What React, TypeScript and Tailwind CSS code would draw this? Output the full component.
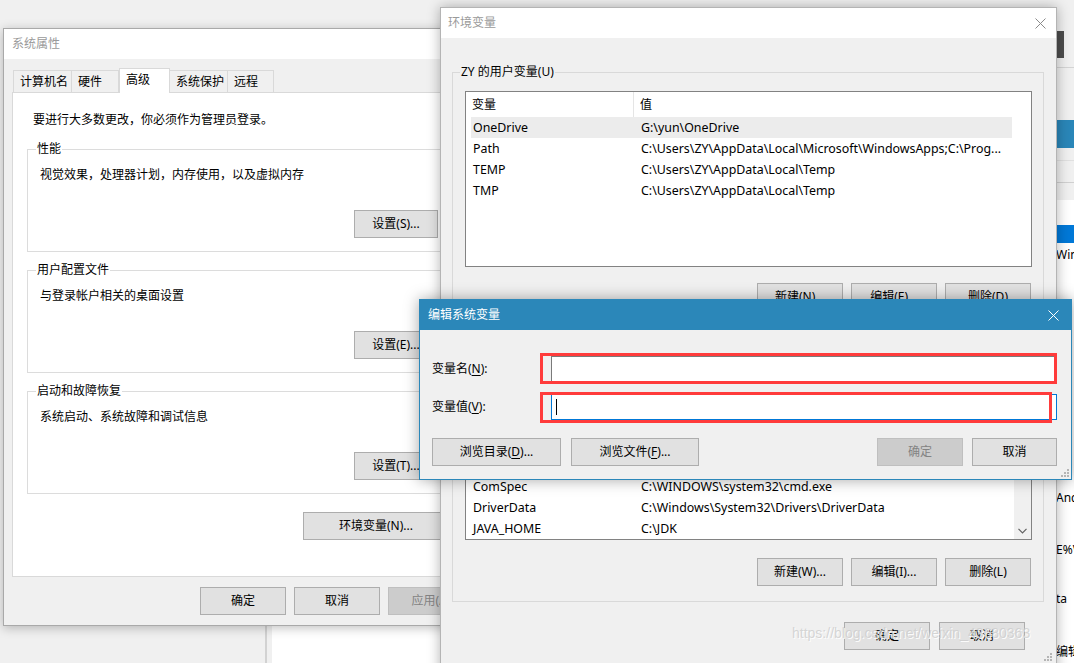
import React from "react";
import clsx from "clsx";

const font = "font-['Noto_Sans','Noto_Sans_CJK_SC',sans-serif]";

function Btn({
  className,
  children,
  disabled,
}: {
  className?: string;
  children: React.ReactNode;
  disabled?: boolean;
}) {
  return (
    <div
      className={clsx(
        "flex h-[28px] shrink-0 items-center justify-center border text-[12px] leading-[16px]",
        disabled ? "border-[#bfbfbf] bg-[#cccccc] text-[#838383]" : "border-[#adadad] bg-[#e1e1e1] text-black",
        className,
      )}
    >
      {children}
    </div>
  );
}

function CloseIcon({ className }: { className?: string }) {
  return (
    <svg width="11" height="11" viewBox="0 0 11 11" className={className}>
      <path d="M0.5 0.5L10.5 10.5M10.5 0.5L0.5 10.5" stroke="currentColor" strokeWidth="1" fill="none" />
    </svg>
  );
}

function Grip() {
  return (
    <svg width="8" height="8" viewBox="0 0 8 8">
      <rect x="6" y="0" width="2" height="2" fill="#b5b5b5" />
      <rect x="3" y="3" width="2" height="2" fill="#b5b5b5" />
      <rect x="6" y="3" width="2" height="2" fill="#b5b5b5" />
      <rect x="0" y="6" width="2" height="2" fill="#b5b5b5" />
      <rect x="3" y="6" width="2" height="2" fill="#b5b5b5" />
      <rect x="6" y="6" width="2" height="2" fill="#b5b5b5" />
    </svg>
  );
}

function SettingGroup({ label, desc, btn }: { label: string; desc: string; btn: string }) {
  return (
    <fieldset className="w-full border border-[#dcdcdc]">
      <legend className="ml-[8px] px-[1px] leading-[16px]">{label}</legend>
      <div className="pb-[13px] pl-[12px] pr-[10px] pt-[10px]">
        <div className="leading-[16px]">{desc}</div>
        <div className="mt-[27px] flex justify-end">
          <Btn className="w-[84px]">{btn}</Btn>
        </div>
      </div>
    </fieldset>
  );
}

const tabs = [
  { name: "计算机名", w: "w-[59px] border-l" },
  { name: "硬件", w: "w-[47px]" },
  { name: "高级", w: "w-[51px]", active: true },
  { name: "系统保护", w: "w-[58px]" },
  { name: "远程", w: "w-[46px]" },
];

function SystemProperties() {
  return (
    <div className="absolute left-[3px] top-[28px] h-[598px] w-[480px] border border-[#a9a9a9] bg-[#f0f0f0] shadow-[0_2px_10px_rgba(0,0,0,0.25)]">
      <div className="flex h-[30px] items-center bg-white pl-[8px] text-[#9a9a9a]">系统属性</div>
      <div className="ml-[9px] mt-[9px] flex h-[24px] items-end">
        {tabs.map((t) =>
          t.active ? (
            <div
              key={t.name}
              className="relative z-10 -mb-[1px] flex h-[25px] w-[51px] border-x border-t border-[#d9d9d9] bg-white pl-[6px] pt-[3px]"
            >
              {t.name}
            </div>
          ) : (
            <div
              key={t.name}
              className={clsx("flex h-[22px] items-center border-r border-t border-[#d9d9d9] pl-[6px] pt-[1px]", t.w)}
            >
              {t.name}
            </div>
          ),
        )}
      </div>
      <div className="ml-[8px] h-[485px] w-[462px] border border-[#d9d9d9] bg-white pl-[14px] pt-[19px]">
        <div className="w-[422px]">
          <div className="pl-[6px] leading-[16px]">要进行大多数更改，你必须作为管理员登录。</div>
          <div className="mt-[13px] flex flex-col gap-[10px]">
            <SettingGroup label="性能" desc="视觉效果，处理器计划，内存使用，以及虚拟内存" btn="设置(S)..." />
            <SettingGroup label="用户配置文件" desc="与登录帐户相关的桌面设置" btn="设置(E)..." />
            <SettingGroup label="启动和故障恢复" desc="系统启动、系统故障和调试信息" btn="设置(T)..." />
          </div>
          <div className="mt-[18px] flex justify-end">
            <Btn className="w-[146px]">环境变量(N)...</Btn>
          </div>
        </div>
      </div>
      <div className="mt-[10px] flex justify-end gap-[8px] pr-[8px]">
        <Btn className="w-[86px]">确定</Btn>
        <Btn className="w-[86px]">取消</Btn>
        <Btn className="w-[86px]" disabled>
          应用(A)
        </Btn>
      </div>
    </div>
  );
}

type Row = [string, string];

const userVars: Row[] = [
  ["OneDrive", "G:\\yun\\OneDrive"],
  ["Path", "C:\\Users\\ZY\\AppData\\Local\\Microsoft\\WindowsApps;C:\\Prog..."],
  ["TEMP", "C:\\Users\\ZY\\AppData\\Local\\Temp"],
  ["TMP", "C:\\Users\\ZY\\AppData\\Local\\Temp"],
];

const systemVars: Row[] = [
  ["ANDROID_HOME", "D:\\Android\\Sdk"],
  ["ANDROID_SDK_HOME", "D:\\Android\\.android"],
  ["CLASSPATH", ".;%JAVA_HOME%\\lib\\dt.jar;%JAVA_HOME%\\lib\\tools.jar;"],
  ["COMPUTERNAME", "ZY-PC"],
  ["ComSpec", "C:\\WINDOWS\\system32\\cmd.exe"],
  ["DriverData", "C:\\Windows\\System32\\Drivers\\DriverData"],
  ["JAVA_HOME", "C:\\JDK"],
  ["NUMBER_OF_PROCESSORS", "8"],
];

function VarList({ rows, selected, scroll, height }: { rows: Row[]; selected?: number; scroll?: boolean; height: string }) {
  return (
    <div className={clsx("flex overflow-hidden border border-[#828282] bg-white", height)}>
      <div className="min-w-0 flex-1 overflow-hidden">
        <div className="flex h-[25px] items-center">
          <div className="flex h-full w-[168px] items-center border-r border-[#e5e5e5] pl-[6px]">变量</div>
          <div className="pl-[6px]">值</div>
        </div>
        {rows.map((r, i) => (
          <div
            key={r[0]}
            className={clsx("ml-[5px] flex h-[21px] items-center text-[12.4px]", i === selected && "bg-[#ececec]")}
          >
            <div className="w-[163px] shrink-0 whitespace-nowrap pl-[2px]">{r[0]}</div>
            <div className="min-w-0 flex-1 truncate pl-[7px]">{r[1]}</div>
          </div>
        ))}
      </div>
      {scroll ? (
        <div className="flex w-[17px] flex-col justify-end bg-[#f0f0f0]">
          <div className="flex h-[17px] items-center justify-center">
            <svg width="9" height="6" viewBox="0 0 9 6">
              <path d="M0.5 0.8L4.5 4.8L8.5 0.8" stroke="#606060" strokeWidth="1.2" fill="none" />
            </svg>
          </div>
        </div>
      ) : (
        <div className="w-[19px]" />
      )}
    </div>
  );
}

function EnvGroup({
  label,
  rows,
  selected,
  scroll,
  listH,
  btnGap,
  btns,
  className,
}: {
  label: string;
  rows: Row[];
  selected?: number;
  scroll?: boolean;
  listH: string;
  btnGap: string;
  btns: string[];
  className?: string;
}) {
  return (
    <fieldset className={clsx("w-[592px] border border-[#d9d9d9]", className)}>
      <legend className="ml-[7px] px-[1px] leading-[16px]">{label}</legend>
      <div className="pb-[15px] pl-[12px] pr-[11px] pt-[11px]">
        <VarList rows={rows} selected={selected} scroll={scroll} height={listH} />
        <div className={clsx("flex justify-end gap-[8px] pr-[1px]", btnGap)}>
          {btns.map((b) => (
            <Btn key={b} className="w-[86px]">
              {b}
            </Btn>
          ))}
        </div>
      </div>
    </fieldset>
  );
}

function EnvironmentVariables() {
  return (
    <div className="absolute left-[440px] top-[7px] h-[680px] w-[617px] border border-[#b4b4b4] bg-[#f0f0f0] shadow-[0_0_12px_rgba(0,0,0,0.3)]">
      <div className="flex h-[30px] items-center justify-between bg-white pl-[7px] pr-[10px] text-[#9a9a9a]">
        <span>环境变量</span>
        <CloseIcon className="text-[#8a8a8a]" />
      </div>
      <div className="pl-[11px] pt-[26px]">
        <EnvGroup
          label="ZY 的用户变量(U)"
          rows={userVars}
          selected={0}
          listH="h-[176px]"
          btnGap="mt-[16px]"
          btns={["新建(N)...", "编辑(E)...", "删除(D)"]}
        />
        <EnvGroup
          className="mt-[12px]"
          label="系统变量(S)"
          rows={systemVars}
          scroll
          listH="h-[174px]"
          btnGap="mt-[18px]"
          btns={["新建(W)...", "编辑(I)...", "删除(L)"]}
        />
      </div>
      <div className="mt-[20px] flex justify-end gap-[9px] pr-[31px]">
        <Btn className="w-[86px]">确定</Btn>
        <Btn className="w-[86px]">取消</Btn>
      </div>
      <div className="flex justify-end pr-[4px] pt-[3px]">
        <Grip />
      </div>
    </div>
  );
}

function EditDialog() {
  return (
    <div className="absolute left-[419px] top-[299px] w-[653px] border border-[#2b87b9] bg-[#f0f0f0] shadow-[0_0_14px_rgba(0,0,0,0.35)]">
      <div className="flex h-[30px] items-center justify-between bg-[#2b87b9] pl-[8px] pr-[12px] text-white">
        <span>编辑系统变量</span>
        <CloseIcon className="text-white" />
      </div>
      <div className="pb-[13px] pl-[12px] pr-[14px] pt-[26px]">
        <div className="flex h-[26px] items-center">
          <div className="w-[119px]">
            变量名(<span className="underline underline-offset-2">N</span>):
          </div>
          <div className="h-full flex-1 border border-[#7a7a7a] bg-white" />
        </div>
        <div className="mt-[12px] flex h-[26px] items-center">
          <div className="w-[119px]">
            变量值(<span className="underline underline-offset-2">V</span>):
          </div>
          <div className="flex h-full flex-1 items-center border border-[#0078d7] bg-white pl-[4px]">
            <div className="h-[16px] w-[1px] bg-black" />
          </div>
        </div>
        <div className="mt-[18px] flex items-center">
          <Btn className="w-[129px]">
            浏览目录(<span className="underline underline-offset-2">D</span>)...
          </Btn>
          <Btn className="ml-[10px] w-[128px]">
            浏览文件(<span className="underline underline-offset-2">F</span>)...
          </Btn>
          <div className="flex-1" />
          <Btn className="w-[86px]" disabled>
            确定
          </Btn>
          <Btn className="ml-[9px] w-[85px]">取消</Btn>
        </div>
      </div>
      <div className="absolute bottom-[2px] right-[2px]">
        <Grip />
      </div>
      {/* red annotation boxes drawn over the inputs */}
      <div className="pointer-events-none absolute left-[120px] top-[53px] h-[31px] w-[517px] border-[3px] border-[#ff3b3b]" />
      <div className="pointer-events-none absolute left-[120px] top-[92px] h-[31px] w-[512px] border-[3px] border-[#ff3b3b]" />
    </div>
  );
}

function RightWindow() {
  return (
    <div className="absolute left-[1056px] top-0 flex h-[663px] w-[18px] flex-col overflow-hidden whitespace-nowrap">
      <div className="h-[31px] bg-[#f0f0f0]" />
      <div className="flex h-[27px] bg-[#f0f0f0]">
        <div className="h-full w-[8px] bg-[#4d4d4d]" />
      </div>
      <div className="h-[9px] bg-[#f0f0f0]" />
      <div className="h-[1px] bg-[#d4d4d4]" />
      <div className="h-[52px] bg-[#f0f0f0]" />
      <div className="h-[28px] bg-[#2a86b8]" />
      <div className="h-[12px] bg-[#f0f0f0]" />
      <div className="h-[1px] bg-[#e0e0e0]" />
      <div className="h-[21px] bg-[#f0f0f0]" />
      <div className="h-[1px] bg-[#d0d0d0]" />
      <div className="h-[17px] bg-[#f0f0f0]" />
      <div className="h-[25px] bg-white" />
      <div className="h-[18px] bg-[#0078d7]" />
      <div className="flex flex-1 flex-col bg-white">
        <div className="mt-[4px] leading-[16px]">Windows</div>
        <div className="mt-[227px] leading-[16px]">Android</div>
        <div className="mt-[36px] leading-[16px]">E%V</div>
        <div className="mt-[33px] leading-[16px]">ta</div>
        <div className="mt-[37px] leading-[16px]">编辑</div>
      </div>
    </div>
  );
}

export default function App() {
  return (
    <div className={clsx("relative h-[663px] w-[1074px] overflow-hidden bg-[#f0f0f0] text-[12px] leading-[16px] text-black", font)}>
      <RightWindow />
      <div className="absolute left-[265px] top-[580px] h-[90px] w-[200px] border-l-2 border-[#d2d2d2] bg-[#f0f0f0] pl-[5px]">
        <div className="h-full bg-white" />
      </div>
      <SystemProperties />
      <EnvironmentVariables />
      <EditDialog />
      <div className="pointer-events-none absolute left-[792px] top-[625px] font-['Liberation_Sans',sans-serif] text-[14px] text-[rgba(205,205,205,0.8)] [text-shadow:1px_1px_0_rgba(255,255,255,0.9)]">
        https://blog.csdn.net/weixin_43680363
      </div>
    </div>
  );
}
